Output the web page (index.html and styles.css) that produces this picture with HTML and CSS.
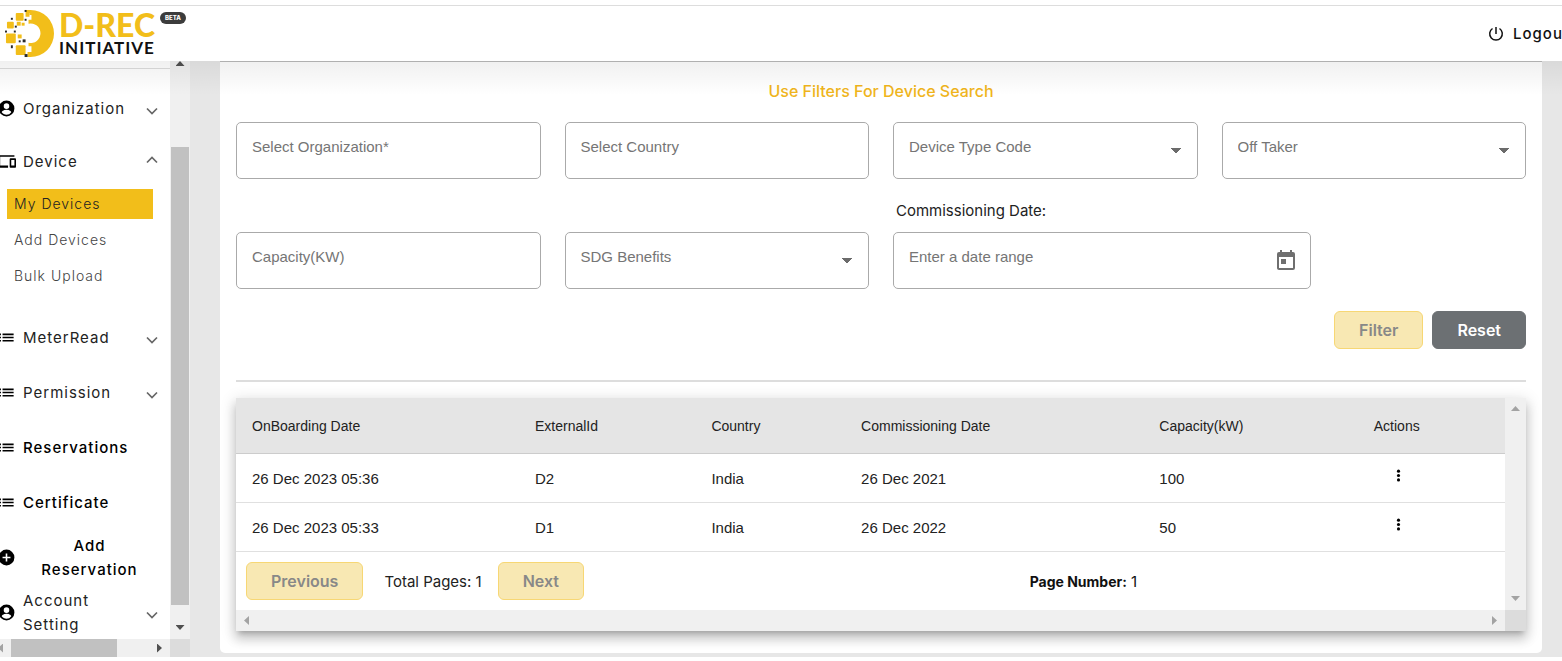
FILE: index.html
```html
<!DOCTYPE html>
<html lang="en">
<head>
<meta charset="utf-8">
<meta name="viewport" content="width=device-width, initial-scale=1">
<title>D-REC Initiative - My Devices</title>
<link rel="stylesheet" href="styles.css">
</head>
<body>
<svg class="defs" aria-hidden="true">
  <symbol id="list" viewBox="0 0 24 24"><path d="M3 13h2v-2H3zm0 4h2v-2H3zm0-8h2V7H3zm4 4h14v-2H7zm0 4h14v-2H7zM7 7v2h14V7z"/></symbol>
  <symbol id="account" viewBox="0 0 24 24"><path d="M12 2a10 10 0 1 0 0 20 10 10 0 0 0 0-20zm0 3.500a3.500 3.500 0 1 1 0 7 3.500 3.500 0 0 1 0-7zm0 14.500c-2.500 0-4.700-1.300-6-3.200.1-2 4-3.100 6-3.100s5.900 1.100 6 3.100a7.200 7.200 0 0 1-6 3.200z"/></symbol>
  <symbol id="chevron" viewBox="0 0 12 8"><path d="M1 1.500l5 5 5-5" fill="none" stroke="#666" stroke-width="1.700"/></symbol>
  <symbol id="dots" viewBox="0 0 24 24"><circle cx="12" cy="5" r="2.500"/><circle cx="12" cy="12" r="2.500"/><circle cx="12" cy="19" r="2.500"/></symbol>
</svg>
<header class="topbar">
  <a class="logo" href="#" aria-label="D-REC Initiative">
    <svg class="logo-mark" viewBox="0 0 50 50" aria-hidden="true">
      <path d="M25 1h1a23.800 23.800 0 1 1 0 48h-3v-5h4v-6h-3v-3.500a10 10 0 1 0 0-19.500v-4h3V6h-2z" fill="#f2be1a"/>
      <path d="M21 1h5v3h-1v4h-4z" fill="#f2be1a"/>
      <g fill="#f2be1a"><rect x="11" y="4" width="8" height="8" rx="1"/><rect x="2" y="13" width="7" height="7" rx="1"/><rect x="12" y="13" width="4" height="4"/><rect x="17" y="14" width="3" height="3"/><rect x="1" y="25" width="10" height="10" rx="1"/><rect x="13" y="26" width="4" height="4"/><rect x="11" y="37" width="10" height="10" rx="1"/></g>
      <g fill="#2b2b2b"><rect x="20" y="1" width="2" height="2"/><rect x="6" y="9" width="2" height="2"/><rect x="20" y="10" width="2" height="2"/><rect x="10" y="17" width="2" height="2"/><rect x="0" y="22" width="2" height="2"/><rect x="9" y="22" width="2" height="2"/><rect x="14" y="32" width="2" height="2"/><rect x="18" y="31" width="3" height="3"/><rect x="6" y="37" width="2" height="3"/><rect x="20" y="46" width="3" height="3"/></g>
    </svg>
    <span class="logo-text"><span class="logo-name">D-REC</span><span class="logo-sub">INITIATIVE</span></span>
    <span class="beta">BETA</span>
  </a>
  <button class="logout" type="button">
    <svg class="power" viewBox="0 0 16 16" aria-hidden="true"><path d="M8 1v7M4.500 2.500a6.300 6.300 0 1 0 7 0" fill="none" stroke="#111" stroke-width="1.500"/></svg>
    <span>Logout</span>
  </button>
</header>
<div class="shell">
  <aside class="sidebar">
    <nav class="menu" aria-label="Main">
      <button class="item first" type="button"><svg class="icon"><use href="#account"/></svg><span>Organization</span><svg class="chev"><use href="#chevron"/></svg></button>
      <button class="item" type="button" aria-expanded="true"><svg class="icon" viewBox="0 0 24 24"><path d="M4 6h18V4H4c-1.100 0-2 .9-2 2v11H0v3h14v-3H4zm19 2h-6c-.6 0-1 .5-1 1v10c0 .6.400 1 1 1h6c.6 0 1-.4 1-1V9c0-.5-.4-1-1-1zm-1 9h-4v-7h4z"/></svg><span>Device</span><svg class="chev up"><use href="#chevron"/></svg></button>
      <div class="submenu">
        <a class="sub active" href="#">My Devices</a>
        <a class="sub" href="#">Add Devices</a>
        <a class="sub" href="#">Bulk Upload</a>
      </div>
      <button class="item" type="button"><svg class="icon"><use href="#list"/></svg><span>MeterRead</span><svg class="chev"><use href="#chevron"/></svg></button>
      <button class="item" type="button"><svg class="icon"><use href="#list"/></svg><span>Permission</span><svg class="chev"><use href="#chevron"/></svg></button>
      <a class="item strong" href="#"><svg class="icon"><use href="#list"/></svg><span>Reservations</span></a>
      <a class="item strong" href="#"><svg class="icon"><use href="#list"/></svg><span>Certificate</span></a>
      <a class="item strong centered" href="#"><svg class="icon" viewBox="0 0 24 24"><path d="M12 2a10 10 0 1 0 0 20 10 10 0 0 0 0-20zm5 11h-4v4h-2v-4H7v-2h4V7h2v4h4z"/></svg><span>Add Reservation</span></a>
      <button class="item" type="button"><svg class="icon"><use href="#account"/></svg><span>Account Setting</span><svg class="chev"><use href="#chevron"/></svg></button>
    </nav>
    <div class="vbar" aria-hidden="true"><i class="tri up"></i><i class="vthumb"></i><i class="tri down"></i></div>
    <div class="hbar" aria-hidden="true"><i class="tri left faint"></i><i class="hthumb"></i><i class="tri right"></i></div>
    <div class="corner"></div>
  </aside>
  <main class="content">
    <section class="panel">
      <h1 class="title">Use Filters For Device Search</h1>
      <form>
        <div class="filters">
          <input class="field" type="text" placeholder="Select Organization*" aria-label="Select Organization">
          <input class="field" type="text" placeholder="Select Country" aria-label="Select Country">
          <select class="field" aria-label="Device Type Code"><option>Device Type Code</option></select>
          <select class="field" aria-label="Off Taker"><option>Off Taker</option></select>
          <input class="field" type="text" placeholder="Capacity(KW)" aria-label="Capacity in KW">
          <select class="field" aria-label="SDG Benefits"><option>SDG Benefits</option></select>
          <div class="date">
            <label class="date-label" for="date-range">Commissioning Date:</label>
            <div class="field date-box">
              <input class="date-input" id="date-range" type="text" placeholder="Enter a date range">
              <button class="plain" type="button" aria-label="Open calendar"><svg class="calendar" viewBox="0 0 24 24"><path d="M19 3h-1V1h-2v2H8V1H6v2H5a2 2 0 0 0-2 2v14c0 1.100.9 2 2 2h14a2 2 0 0 0 2-2V5a2 2 0 0 0-2-2zm0 16H5V8h14zM7 10h5v5H7z" fill="#6f6f6f"/></svg></button>
            </div>
          </div>
        </div>
        <div class="actions">
          <button class="btn" type="submit" disabled>Filter</button>
          <button class="btn dark" type="reset">Reset</button>
        </div>
      </form>
      <hr class="rule">
      <div class="table-card">
        <div class="table-area">
          <table class="devices">
            <colgroup><col class="c1"><col class="c2"><col class="c3"><col class="c4"><col class="c5"><col class="c6"></colgroup>
            <thead><tr><th>OnBoarding Date</th><th>ExternalId</th><th>Country</th><th>Commissioning Date</th><th>Capacity(kW)</th><th>Actions</th></tr></thead>
            <tbody>
              <tr><td>26 Dec 2023 05:36</td><td>D2</td><td>India</td><td>26 Dec 2021</td><td>100</td><td><button class="plain more" type="button" aria-label="Actions for D2"><svg class="dots"><use href="#dots"/></svg></button></td></tr>
              <tr><td>26 Dec 2023 05:33</td><td>D1</td><td>India</td><td>26 Dec 2022</td><td>50</td><td><button class="plain more" type="button" aria-label="Actions for D1"><svg class="dots"><use href="#dots"/></svg></button></td></tr>
            </tbody>
          </table>
          <div class="pager">
            <div class="pager-nav">
              <button class="btn" type="button" disabled>Previous</button>
              <span class="total">Total Pages: 1</span>
              <button class="btn" type="button" disabled>Next</button>
            </div>
            <div class="page"><b>Page Number:</b> 1</div>
          </div>
        </div>
        <div class="vbar light" aria-hidden="true"><i class="tri up"></i><i class="tri down"></i></div>
        <div class="hbar light" aria-hidden="true"><i class="tri left"></i><i class="tri right"></i></div>
        <div class="corner"></div>
      </div>
    </section>
  </main>
</div>
</body>
</html>
```
FILE: styles.css
```css
* { box-sizing: border-box; }
html, body { height: 100%; }
body { margin: 0; padding-bottom: 4px; display: flex; flex-direction: column; overflow: hidden; background: #fff; color: #222; font-family: Inter, "Open Sans", sans-serif; font-size: 15px; }
button, input, select { font: inherit; color: inherit; }
a { color: inherit; text-decoration: none; }
svg { display: block; flex: none; }
.defs { position: absolute; width: 0; height: 0; }

.topbar { flex: none; display: flex; align-items: center; justify-content: space-between; height: 56px; margin-top: 5px; border-top: 1px solid #ddd; background: #fff; overflow: hidden; }
.logo { display: flex; align-items: center; gap: 5px; padding-left: 5px; }
.logo-mark { width: 49px; height: 49px; }
.logo-text { display: flex; flex-direction: column; font-family: Lato, sans-serif; font-weight: 900; }
.logo-name { color: #f2be1a; font-size: 32px; line-height: 28px; }
.logo-sub { color: #111; font-size: 17px; line-height: 18px; font-weight: 700; letter-spacing: 1px; }
.beta { align-self: flex-start; margin-top: 3px; padding: 0 5px; border-radius: 6px; background: #3c3c3c; color: #fff; font-size: 6px; line-height: 12px; font-weight: 800; }
.logout { display: flex; align-items: center; gap: 9px; width: 74px; padding: 0; border: 0; background: none; color: #111; font-weight: 500; letter-spacing: 1px; }
.power { width: 16px; height: 16px; }

.shell { flex: 1; min-height: 0; display: flex; position: relative; background: #e7e7e7; }
.shell::after { content: ""; position: absolute; inset: 0 0 auto; height: 34px; background: linear-gradient(rgba(0, 0, 0, .06), transparent); pointer-events: none; }

.sidebar { flex: none; width: 190px; display: grid; grid-template: minmax(0, 1fr) 18px / 1fr 20px; background: #fff; }
.menu { margin-top: 7px; padding-top: 13px; border-top: 1px solid #ddd; display: flex; flex-direction: column; overflow: hidden; }
.item { flex: none; display: flex; align-items: center; gap: 7px; min-height: 55px; width: 100%; padding: 0 12px 0 0; border: 0; background: none; color: #222; text-align: left; line-height: 24px; letter-spacing: 1px; }
.item.first, .item.first + .item { min-height: 53px; }
.strong { color: #000; font-weight: 500; }
.centered { text-align: center; padding-right: 14px; }
.item span { flex: 1; }
.icon { width: 19px; height: 19px; margin-left: -3px; }
.chev { width: 12px; height: 8px; transform: translateY(2px); }
.chev.up { transform: rotate(180deg) translateY(2px); }
.submenu { flex: none; display: flex; flex-direction: column; gap: 6px; margin: 1px 17px 19px 7px; }
.sub { padding: 0 7px; line-height: 30px; color: #444; font-size: 14px; font-weight: 300; letter-spacing: 1px; }
.active { background: #f2be1a; color: #222; }

.vbar, .hbar { display: flex; align-items: center; justify-content: space-between; background: #f0f0f0; }
.vbar { flex-direction: column; }
.vthumb { width: 18px; flex: 1; margin: 81px 0 20px; background: #c1c1c1; }
.hthumb { width: 106px; height: 18px; margin-left: 8px; margin-right: auto; background: #c1c1c1; }
.corner { background: #dcdcdc; }
.tri { width: 9px; height: 5px; background: #505050; }
.tri.up { clip-path: polygon(50% 0, 100% 100%, 0 100%); }
.tri.down { clip-path: polygon(0 0, 100% 0, 50% 100%); margin-bottom: 9px; }
.tri.left, .tri.right { width: 5px; height: 9px; }
.tri.left { clip-path: polygon(100% 0, 100% 100%, 0 50%); }
.tri.right { clip-path: polygon(0 0, 100% 50%, 0 100%); margin-right: 8px; }
.tri.faint { margin-left: -2px; background: #a3a3a3; }

.content { flex: 1; min-width: 0; padding: 0 20px 4px 30px; }
.panel { height: 100%; padding: 17px 16px 0; border-top: 1px solid #bbb; border-radius: 0 0 5px 5px; background: #fff; }
.title { margin: 0; text-align: center; color: #f0b51c; font-size: 16px; line-height: 24px; font-weight: 500; }
.filters { display: grid; grid-template-columns: repeat(4, minmax(0, 1fr)); gap: 18px 24px; margin-top: 19px; align-items: end; }
.field { width: 100%; height: 57px; padding: 0 15px 8px; border: 1px solid #aaa; border-radius: 5px; outline: 0; background: #fff; color: #757575; font-family: "Liberation Sans", Arial, sans-serif; }
.field::placeholder, .date-input::placeholder { color: #757575; opacity: 1; }
select.field { appearance: none; background: linear-gradient(to bottom left, #6b6b6b 50%, transparent 52%) no-repeat right 21px center / 5px 5px, linear-gradient(to bottom right, #6b6b6b 50%, transparent 52%) no-repeat right 16px center / 5px 5px; }
.date { grid-column: span 2; }
.date-label { display: block; margin: 2px 0 9px 3px; line-height: 24px; }
.date-box { display: flex; align-items: center; width: 66%; padding: 0 12px 0 15px; }
.date-input { flex: 1; min-width: 0; padding: 0 0 8px; border: 0; outline: 0; background: none; }
.plain { padding: 0; border: 0; background: none; }
.calendar { width: 24px; height: 24px; }
.actions { display: flex; justify-content: flex-end; gap: 9px; margin-top: 22px; }
.btn { height: 38px; padding: 0 24px; border: 1px solid #f7d774; border-radius: 6px; background: #f8e8b3; color: #888; font-size: 16px; font-weight: 600; }
.dark { border-color: #6c7073; background: #6c7073; color: #fff; }
.rule { height: 2px; margin: 31px 0 16px; border: 0; background: #ddd; }

.table-card { display: grid; grid-template: auto 21px / minmax(0, 1fr) 21px; background: #fff; box-shadow: 0 5px 5px -3px rgba(0, 0, 0, .2), 0 8px 10px 1px rgba(0, 0, 0, .14), 0 3px 14px 2px rgba(0, 0, 0, .12); }
.devices { width: 100%; table-layout: fixed; border-collapse: separate; border-spacing: 0; font-family: "Liberation Sans", Arial, sans-serif; }
.devices th, .devices td { padding: 0 16px; text-align: left; border-bottom: 1px solid #e0e0e0; }
.devices th { height: 56px; background: #e5e5e5; border-color: #ccc; font-size: 14px; font-weight: 400; }
.devices td { height: 49px; }
.c1 { width: 22.3%; }
.c2 { width: 13.9%; }
.c3 { width: 11.8%; }
.c4 { width: 23.5%; }
.c5 { width: 16.9%; }
.c6 { width: 11.6%; }
.more { display: block; margin: 0 0 6px 17px; }
.dots { width: 15px; height: 15px; }
.pager { display: grid; grid-template-columns: 5fr 3fr; align-items: center; padding: 10px; }
.pager-nav { display: flex; align-items: center; gap: 16px; }
.total { padding-left: 5px; }
.page { padding-left: 3px; color: #111; }
.page b { font-size: 14px; }
.light { background: #f0f0f0; }
.light .tri { background: #a3a3a3; }
.light .tri.up { margin-top: 8px; }
.light .tri.left { margin-left: 8px; }
```
